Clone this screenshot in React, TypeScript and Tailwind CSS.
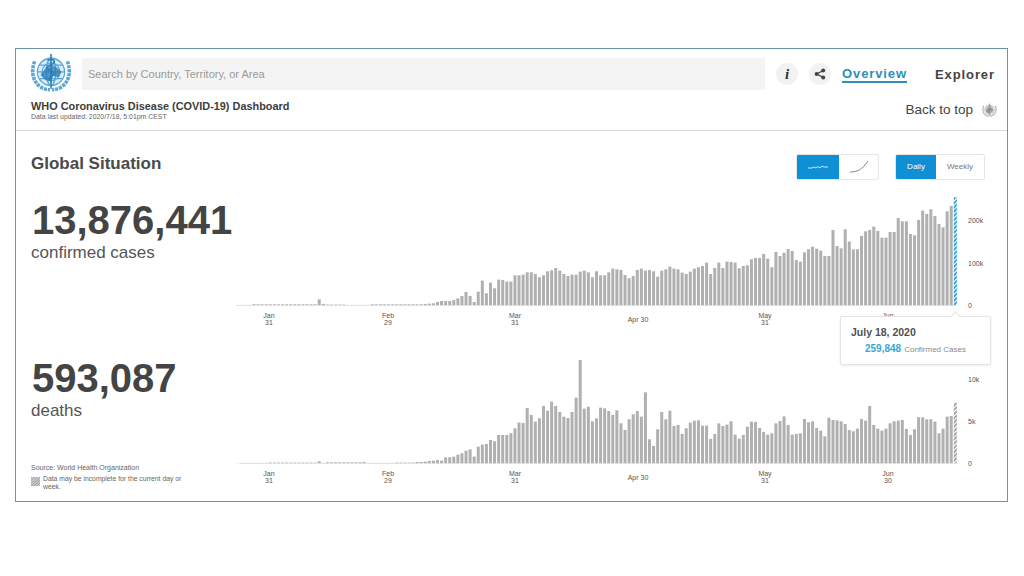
import React from 'react';

// bar heights in 1/3 px, read off the reference
const casesBars = [
  1, 1, 1, 1, 3, 3, 3, 3, 3, 3, 3, 3, 3, 3, 3, 3, 3, 3, 3, 3, 18, 4, 2, 2, 2, 2, 2, 1, 1, 1, 1, 1, 1, 3, 3, 3, 3, 3, 3, 3, 3, 3, 3,
  3, 3, 3, 4, 5, 6, 10, 13, 13, 13, 16, 21, 28, 40, 28, 10, 41, 74, 36, 68, 51, 77, 76, 71, 71, 90, 90, 92, 99, 99, 94, 84, 90, 102,
  105, 112, 104, 94, 88, 92, 92, 101, 104, 99, 84, 102, 90, 90, 99,
  110, 108, 106, 91, 81, 88, 106, 110, 104, 106, 102, 86, 104, 108, 116, 110, 108, 98, 94, 101, 110, 114, 118, 128, 94, 112, 128,
  112, 131, 130, 128, 111, 118, 120, 138, 142, 142, 154, 140, 114, 160, 148, 158, 169, 163, 136, 131, 159, 168, 176, 170, 164, 148,
  148, 226, 178, 171, 228, 191, 168, 168, 208, 222, 226, 236, 223, 203, 203, 220, 220, 262, 252, 252, 214, 210, 256, 284, 274, 288,
  268, 244, 234, 282, 298, 324,
];

const deathsBars = [
  0, 1, 1, 1, 1, 1, 1, 1, 2, 2, 2, 2, 2, 2, 2, 2, 2, 2, 2, 2, 6, 1, 3, 3, 3, 3, 3, 3, 3, 3, 3, 4, 1, 1, 1, 1, 1, 1, 1, 2, 2, 2, 2,
  2, 4, 4, 5, 7, 8, 10, 8, 18, 18, 20, 26, 30, 38, 42, 20, 50, 56, 58, 70, 66, 85, 85, 85, 90, 105, 122, 121, 166, 145, 125, 135,
  172, 158, 185, 172, 154, 140, 136, 154, 197, 310, 164, 170, 126, 135, 167, 165, 157,
  145, 159, 120, 100, 132, 147, 157, 140, 213, 72, 52, 102, 154, 132, 158, 112, 115, 88, 105, 122, 128, 129, 113, 113, 73, 88, 120,
  112, 116, 126, 86, 74, 85, 110, 125, 124, 106, 94, 86, 90, 120, 127, 141, 115, 86, 88, 90, 133, 123, 126, 106, 98, 81, 137, 130,
  129, 126, 118, 100, 96, 104, 133, 128, 172, 115, 104, 98, 104, 120, 126, 128, 130, 103, 85, 102, 138, 138, 132, 132, 125, 90, 104,
  140, 142, 182,
];

const xTicks = [
  { x: 33, top: 'Jan', bottom: '31' },
  { x: 152, top: 'Feb', bottom: '29' },
  { x: 279, top: 'Mar', bottom: '31' },
  { x: 402, top: 'Apr 30' },
  { x: 529, top: 'May', bottom: '31' },
  { x: 652, top: 'Jun', bottom: '30' },
];

const WhoLogo = ({ size, color, dark }: { size: number; color: string; dark: string }) => (
  <svg width={size} height={size} viewBox="0 0 40 40" fill="none">
    {/* laurel */}
    <g stroke={color} strokeWidth="3.4" strokeDasharray="3 0.8">
      <path d="M4.500 8C1 16 2 26 9 31.500c3 2.500 7 3.500 10 3.500" />
      <path d="M35.500 8c3.500 8 2.500 18-4.500 23.500-3 2.500-7 3.500-10 3.500" />
    </g>
    {/* globe */}
    <circle cx="20" cy="18" r="14" fill="#ffffff" />
    <g stroke={color} strokeWidth="1.2">
      <circle cx="20" cy="18" r="13" fill="#d9ecf7" />
      <circle cx="20" cy="18" r="8.500" />
      <ellipse cx="20" cy="18" rx="4.500" ry="13" />
      <path d="M7 18h26M9 11.500h22M9 24.500h22" />
    </g>
    <path d="M10 21l5-7 6-2 5 2 4 4-3 5-5-1-2 5-5-1z" fill={dark} opacity="0.8" />
    <path d="M20 1v33" stroke={dark} strokeWidth="1.5" />
    <path d="M16.500 7c5-2 8 0 6 2.500s-7 2-6 5 7 2.500 6 5.500-5 3-4 5.500" stroke={dark} strokeWidth="1.4" />
  </svg>
);

const BarChart = ({
  bars,
  height,
  baseline,
  lastFill,
  yTicks,
  id,
}: {
  bars: number[];
  height: number;
  baseline: number;
  lastFill: string;
  yTicks: { label: string; y: number }[];
  id: string;
}) => {
  const pitch = 717.6 / (bars.length - 1);
  return (
    <svg width={764} height={height} className="shrink-0 font-['Liberation_Sans',sans-serif]">
      <defs>
        <pattern id={id} width="3" height="3" patternUnits="userSpaceOnUse" patternTransform="rotate(45)">
          <rect width="3" height="3" fill="#ffffff" />
          <rect width="2" height="3" fill={lastFill} />
        </pattern>
      </defs>
      <line x1="1" x2="720" y1={baseline} y2={baseline} stroke="#dddddd" strokeWidth="0.6" />
      {bars.map((b, i) => {
        const h = b / 3;
        return (
          <rect
            key={i}
            x={1.7 + i * pitch - 1.5}
            y={baseline - h}
            width={3}
            height={h}
            fill={i === bars.length - 1 ? `url(#${id})` : '#b1b0b0'}
          />
        );
      })}
      {yTicks.map((t) => (
        <text key={t.label} x="732" y={t.y + 2.5} fontSize="7" fill="#555555">
          {t.label}
        </text>
      ))}
      {xTicks.map((t) => (
        <text key={t.top} x={t.x} textAnchor="middle" fontSize="7" fill="#555555">
          <tspan x={t.x} y={baseline + (t.bottom ? 13 : 17)}>{t.top}</tspan>
          {t.bottom && <tspan x={t.x} y={baseline + 20}>{t.bottom}</tspan>}
        </text>
      ))}
    </svg>
  );
};

const App = () => {
  return (
    <div className="h-[576px] w-[1024px] overflow-hidden bg-white pl-[15px] pt-[48px] font-['Liberation_Sans',sans-serif] text-[#444444]">
      <div className="relative h-[454px] w-[993px] border border-[#6b94a8] bg-white">
        {/* Top bar */}
        <div className="flex h-[41px] items-start pl-[14px] pr-[11px] pt-[9px]">
          <div className="mt-[-5px] w-[52px]">
            <WhoLogo size={42} color="#5ba6d6" dark="#2a7fb8" />
          </div>
          <div className="flex h-[32px] w-[683px] items-center bg-[#f4f4f4] px-[6px] text-[11px] text-[#9a9a9a]">
            Search by Country, Territory, or Area
          </div>
          <div className="flex h-[32px] items-center">
            <button className="ml-[11px] flex size-[22px] items-center justify-center rounded-full bg-[#f2f2f2] font-['Liberation_Serif',serif] text-[15px] font-bold italic text-[#333333]">
              i
            </button>
            <button className="ml-[11px] flex size-[22px] items-center justify-center rounded-full bg-[#f2f2f2]">
              <svg width="12" height="12" viewBox="0 0 12 12" fill="#444444">
                <circle cx="2.600" cy="6" r="2" />
                <circle cx="9.200" cy="2.600" r="2" />
                <circle cx="9.200" cy="9.400" r="2" />
                <path d="M2.600 6l6.600-3.400M2.600 6l6.600 3.400" stroke="#444444" strokeWidth="1.200" />
              </svg>
            </button>
            <span className="ml-[11px] border-b-2 border-[#2e8fb8] text-[13px] leading-[15px] font-bold tracking-[0.9px] text-[#2e8fb8]">
              Overview
            </span>
            <span className="ml-[28px] text-[13px] leading-[15px] font-bold tracking-[0.9px] text-[#444444]">
              Explorer
            </span>
          </div>
        </div>

        {/* Title row */}
        <div className="flex h-[41px] items-center justify-between border-b border-[#d9d9d9] pl-[15px] pr-[10px]">
          <div>
            <div className="text-[10.9px] leading-[13px] font-bold text-[#3d3d3d]">
              WHO Coronavirus Disease (COVID-19) Dashboard
            </div>
            <div className="text-[6.9px] leading-[8px] text-[#666666]">Data last updated: 2020/7/18, 5:01pm CEST</div>
          </div>
          <div className="flex items-center gap-[9px] text-[13.500px] text-[#444444]">
            Back to top
            <WhoLogo size={15} color="#a8a8a8" dark="#8a8a8a" />
          </div>
        </div>

        {/* Section head */}
        <div className="flex h-[59px] justify-between pl-[15px] pr-[22px] pt-[23px]">
          <h2 className="text-[17px] leading-[20px] font-bold text-[#4a4a4a]">Global Situation</h2>
          <div className="flex gap-[16px]">
            <div className="flex h-[26px] w-[83px] overflow-hidden rounded-[2px] border border-[#e6e6e6]">
              <div className="flex w-[42px] items-center justify-center bg-[#0f90d4]">
                <svg width="20" height="6" viewBox="0 0 20 6" fill="none" stroke="#ffffff" strokeWidth="0.8">
                  <path d="M0 4h4l2-1 2 1 2-1.500 2 1.500 2-2 2 1h4" />
                </svg>
              </div>
              <div className="flex flex-1 items-center justify-center">
                <svg width="20" height="14" viewBox="0 0 20 14" fill="none" stroke="#666666" strokeWidth="0.8">
                  <path d="M1 12c7 0 12-2 18-11" />
                </svg>
              </div>
            </div>
            <div className="flex h-[26px] w-[90px] overflow-hidden rounded-[2px] border border-[#e6e6e6] text-[8px]">
              <div className="flex w-[40px] items-center justify-center bg-[#0f90d4] text-white">Daily</div>
              <div className="flex flex-1 items-center justify-center text-[#777777]">Weekly</div>
            </div>
          </div>
        </div>

        {/* Confirmed cases */}
        <div className="flex h-[160px]">
          <div className="w-[220px] shrink-0 pl-[15px] pt-[8px]">
            <div className="pl-px text-[40px] leading-[44px] font-bold">13,876,441</div>
            <div className="mt-px text-[17px] leading-[20px] text-[#555555]">confirmed cases</div>
          </div>
          <BarChart
            id="hatch-cases"
            bars={casesBars}
            height={160}
            baseline={115.3}
            lastFill="#2ea6dc"
            yTicks={[
              { label: '200k', y: 30.7 },
              { label: '100k', y: 73 },
              { label: '0', y: 115 },
            ]}
          />
        </div>

        {/* Deaths */}
        <div className="flex h-[151px]">
          <div className="w-[220px] shrink-0 pl-[15px] pt-[6px]">
            <div className="pl-px text-[40px] leading-[44px] font-bold">593,087</div>
            <div className="mt-px text-[17px] leading-[20px] text-[#555555]">deaths</div>
            <div className="mt-[43px] text-[7px] leading-[8px] text-[#666666]">Source: World Health Organization</div>
            <div className="mt-[3px] flex items-start gap-[3px] pr-[40px] text-[6.800px] leading-[8px] text-[#666666]">
              <svg width="9" height="9" className="mt-[2px] shrink-0">
                <defs>
                  <pattern id="hatch-note" width="2" height="2" patternUnits="userSpaceOnUse" patternTransform="rotate(45)">
                    <rect width="2" height="2" fill="#d8d8d8" />
                    <rect width="1" height="2" fill="#9d9d9d" />
                  </pattern>
                </defs>
                <rect width="9" height="9" fill="url(#hatch-note)" />
              </svg>
              <span>Data may be incomplete for the current day or week.</span>
            </div>
          </div>
          <BarChart
            id="hatch-deaths"
            bars={deathsBars}
            height={151}
            baseline={113.3}
            lastFill="#a5a5a5"
            yTicks={[
              { label: '10k', y: 29 },
              { label: '5k', y: 71 },
              { label: '0', y: 113 },
            ]}
          />
        </div>

        {/* Tooltip */}
        <div className="absolute left-[824px] top-[267px] h-[49px] w-[151px] rounded-[2px] border border-[#e4e4e4] bg-white pl-[10px] pt-[9px] shadow-[0_1px_3px_rgba(0,0,0,0.08)]">
          <div className="absolute left-[111px] top-[-4px] size-[7px] rotate-45 border-l border-t border-[#e4e4e4] bg-white" />
          <div className="text-[10.5px] leading-[13px] font-bold text-[#505050]">July 18, 2020</div>
          <div className="mt-[3px] flex items-baseline gap-[3px] pl-[14px]">
            <span className="text-[10px] leading-[13px] font-bold text-[#3aa6cf]">259,848</span>
            <span className="text-[8px] leading-[13px] text-[#8a8a8a]">Confirmed Cases</span>
          </div>
        </div>
      </div>
    </div>
  );
};

export default App;
